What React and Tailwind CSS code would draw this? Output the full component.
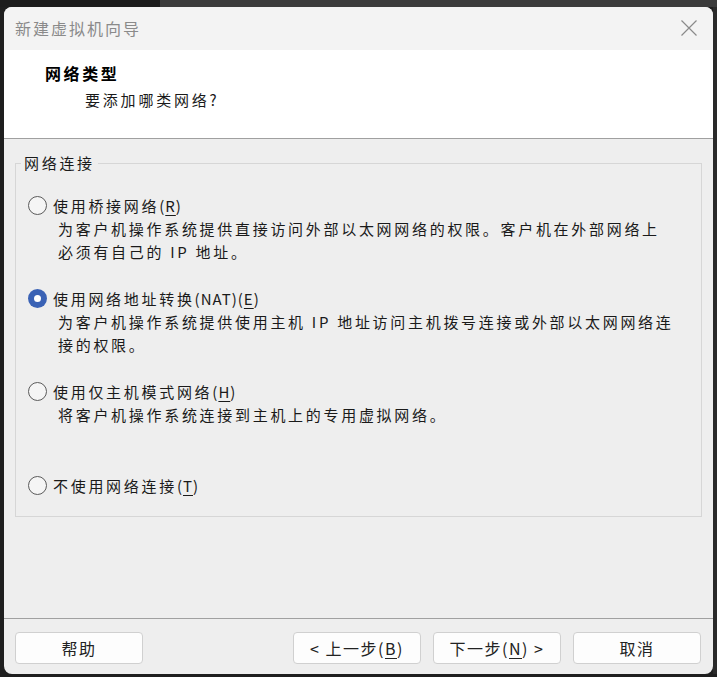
const F = "font-['Noto_Sans_CJK_SC','Noto_Sans',sans-serif]";

function Radio({ checked }) {
  if (checked) {
    return (
      <span className="w-[19px] h-[19px] rounded-full bg-[#3a62b5] flex items-center justify-center shrink-0">
        <span className="w-[7px] h-[7px] rounded-full bg-white" />
      </span>
    );
  }
  return <span className="w-[19px] h-[19px] rounded-full border border-[#5b5b5b] bg-[#f5f5f5] shrink-0" />;
}

function U({ children }) {
  return <span className="underline underline-offset-[3px] decoration-1">{children}</span>;
}

function Option({ checked, label, desc, className = "" }) {
  return (
    <div className={"flex flex-col " + className}>
      <div className="flex items-center h-[23px]">
        <Radio checked={checked} />
        <span className="ml-[6px] leading-[23px] text-[#1a1a1a]">{label}</span>
      </div>
      {desc && <div className="pl-[30px] leading-[23px] text-[#1a1a1a]">{desc}</div>}
    </div>
  );
}

function Btn({ children }) {
  return (
    <button className="w-[128px] h-[32px] rounded-[4px] border border-[#d0d0d0] bg-[#fdfdfd] text-[16px] tracking-[1.5px] text-[#222] flex items-center justify-center whitespace-pre">
      {children}
    </button>
  );
}

export default function App() {
  return (
    <div className={"w-[717px] h-[677px] bg-[#1e1e1e] flex flex-col overflow-hidden " + F}>
      <div className="h-[7px] flex shrink-0">
        <div className="w-[160px] bg-[#1c1c1c]" />
        <div className="flex-1 bg-[#3b3b3b]" />
      </div>
      <div className="flex">
        <div className="w-[4px] bg-[#1e1e1e]" />
        <div className="w-[709px] h-[667px] rounded-[8px] overflow-hidden flex flex-col bg-[#eeeeee]">
          {/* title bar */}
          <div className="h-[43px] bg-[#f3f3f3] flex items-center justify-between pl-[11px] pr-[16px] shrink-0">
            <span className="text-[16px] tracking-[2px] text-[#8a8a8a] pb-[2px]">新建虚拟机向导</span>
            <svg width="16" height="16" viewBox="0 0 16 16" className="mb-[2px]">
              <path d="M0.5 0.5 L15.5 15.5 M15.5 0.5 L0.5 15.5" stroke="#8a8a8a" strokeWidth="1.2" fill="none" />
            </svg>
          </div>
          {/* header */}
          <div className="h-[89px] bg-white border-b border-[#a0a0a0] shrink-0 pt-[12px] pl-[41px]">
            <div className="text-[16px] font-bold tracking-[2.6px] leading-[22px] text-black">网络类型</div>
            <div className="mt-[5px] pl-[40px] text-[15px] tracking-[2.8px] leading-[22px] text-[#1a1a1a]">要添加哪类网络?</div>
          </div>
          {/* body */}
          <div className="flex-1 px-[11px] pt-[13px] text-[15px] tracking-[2.7px] whitespace-nowrap">
            <fieldset className="border border-[#d6d6d6] pl-[12px] pt-[20px] pb-[19px]">
              <legend className="-ml-[7px] px-[3px] leading-[22px] text-[#1a1a1a]">网络连接</legend>
              <Option
                label={<>使用桥接网络<span className="tracking-[1px]">(<U>R</U>)</span></>}
                desc={<>为客户机操作系统提供直接访问外部以太网网络的权限。客户机在外部网络上<br />必须有自己的 IP 地址。</>}
              />
              <Option
                className="mt-[24px]"
                checked
                label={<>使用网络地址转换<span className="tracking-[1px]">(NAT)(<U>E</U>)</span></>}
                desc={<>为客户机操作系统提供使用主机 IP 地址访问主机拨号连接或外部以太网网络连<br />接的权限。</>}
              />
              <Option
                className="mt-[24px]"
                label={<>使用仅主机模式网络<span className="tracking-[1px]">(<U>H</U>)</span></>}
                desc={<>将客户机操作系统连接到主机上的专用虚拟网络。</>}
              />
              <Option className="mt-[48px]" label={<>不使用网络连接<span className="tracking-[1px]">(<U>T</U>)</span></>} />
            </fieldset>
          </div>
          {/* footer */}
          <div className="h-[56px] shrink-0 border-t border-[#a0a0a0] pt-[13px] pl-[11px] pr-[12px] flex">
            <Btn>帮助</Btn>
            <div className="flex-1" />
            <div className="flex gap-[12px]">
              <Btn>&lt; 上一步(<U>B</U>)</Btn>
              <Btn>下一步(<U>N</U>) &gt;</Btn>
              <Btn>取消</Btn>
            </div>
          </div>
        </div>
        <div className="w-[4px] bg-[#2a2a2a]" />
      </div>
    </div>
  );
}
